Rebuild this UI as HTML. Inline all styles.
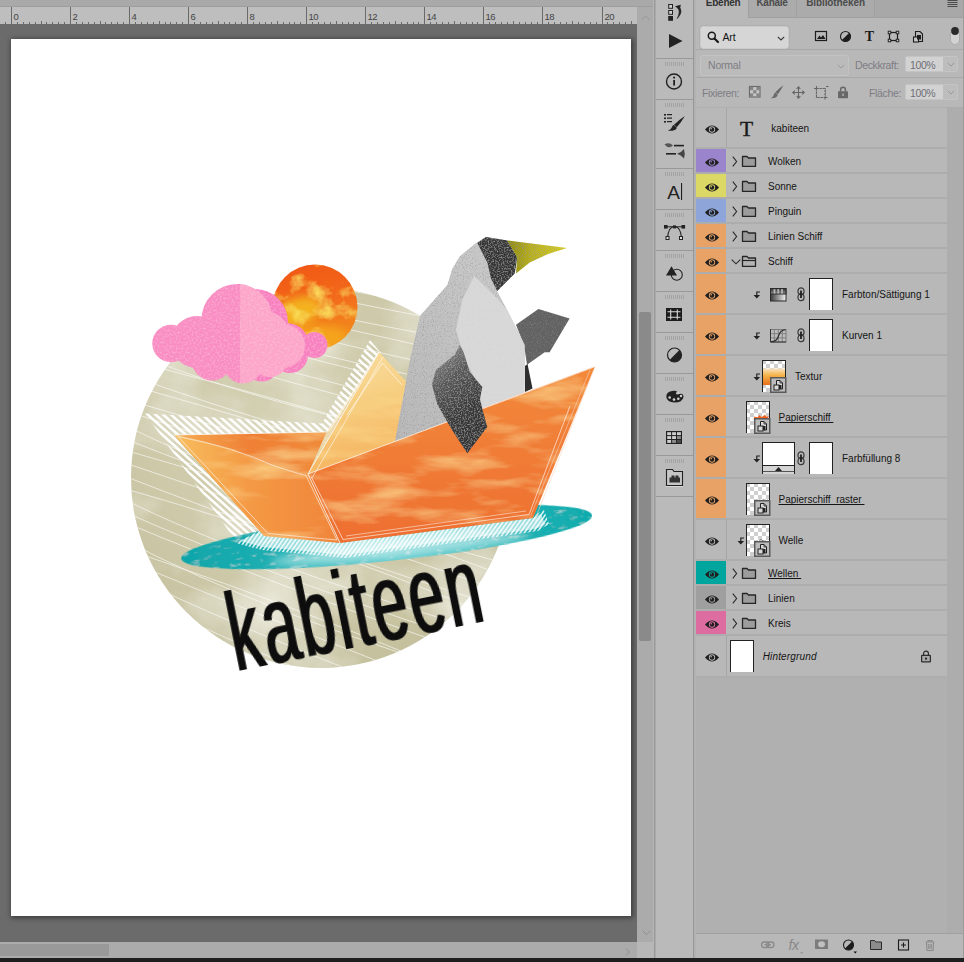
<!DOCTYPE html>
<html lang="de">
<head>
<meta charset="utf-8">
<title>kabiteen – Ebenen</title>
<style>
*{box-sizing:border-box;margin:0;padding:0}
html,body{width:964px;height:962px;overflow:hidden;background:#1e1e1e}
body{position:relative;font-family:"Liberation Sans",sans-serif;font-size:10.5px;color:#1a1a1a}
.abs,.abs>*{position:absolute}
svg{display:block;overflow:visible}
#topstrip{left:0;top:0;width:654px;height:7px;background:#a9a9a9;border-bottom:1px solid #9e9e9e}
#ruler{left:0;top:7px;width:637px;height:17px;background:#bebebe;overflow:hidden}
#ruler span{top:4px;font-size:9.5px;color:#454545;letter-spacing:-.6px}
#ruler i{width:1px;background:#6a6a6a;bottom:0}
#canvas{left:0;top:24px;width:637px;height:918px;background:#6b6b6b;overflow:hidden}
#page{left:11px;top:15px;width:620px;height:877px;background:#fff;box-shadow:1px 1px 5px 1px rgba(0,0,0,.45)}
#vscroll{left:637px;top:7px;width:16px;height:935px;background:#ababab}
#vthumb{left:2px;top:305px;width:12px;height:329px;background:#8a8a8a;border-radius:2px}
#hscroll{left:0;top:942px;width:637px;height:16px;background:#ababab}
#hthumb{left:0;top:2px;width:109px;height:12px;background:#999}
#corner{left:637px;top:942px;width:16px;height:16px;background:#b7b7b7}
#gap1{left:653px;top:0;width:3px;height:958px;background:#b6b6b6;border-right:1px solid #aaa;box-shadow:inset -1px 0 0 #999}
#tools{left:656px;top:0;width:37px;height:958px;background:#bababa}
#gap2{left:693px;top:0;width:3px;height:958px;background:#b2b2b2;border-left:1px solid #979797}
.tsep{left:0;width:37px;height:1px;background:#999}
.grip{left:9px;width:20px;height:4px;background:repeating-linear-gradient(90deg,#a3a3a3 0,#a3a3a3 1px,transparent 1px,transparent 2px)}
#panel{left:696px;top:0;width:268px;height:958px;background:#b8b8b8;overflow:hidden}
.tab{top:0;height:17px;font-size:10px;font-weight:bold;color:#4c4c4c;line-height:8px;white-space:nowrap;letter-spacing:-.25px}
.row{left:0;width:251px;background:#b8b8b8}
.th>*{position:absolute}
.sw{left:0;top:0;width:29.5px;bottom:0}
.nm{white-space:nowrap;font-size:10px;letter-spacing:0;color:#151515;line-height:12px}
.th{background:#fff;border:1px solid #222}
</style>
</head>
<body>
<div id="topstrip" class="abs"></div>
<div id="ruler" class="abs"><i style="left:5.0px;height:2px"></i><i style="left:11.0px;height:17px"></i><span style="left:13.5px">0</span><i style="left:17.0px;height:2px"></i><i style="left:23.0px;height:2px"></i><i style="left:29.0px;height:2px"></i><i style="left:35.0px;height:2px"></i><i style="left:41.0px;height:3px"></i><i style="left:46.0px;height:2px"></i><i style="left:52.0px;height:2px"></i><i style="left:58.0px;height:2px"></i><i style="left:64.0px;height:2px"></i><i style="left:70.0px;height:17px"></i><span style="left:72.5px">2</span><i style="left:76.0px;height:2px"></i><i style="left:82.0px;height:2px"></i><i style="left:88.0px;height:2px"></i><i style="left:94.0px;height:2px"></i><i style="left:100.0px;height:3px"></i><i style="left:105.0px;height:2px"></i><i style="left:111.0px;height:2px"></i><i style="left:117.0px;height:2px"></i><i style="left:123.0px;height:2px"></i><i style="left:129.0px;height:17px"></i><span style="left:131.5px">4</span><i style="left:135.0px;height:2px"></i><i style="left:141.0px;height:2px"></i><i style="left:147.0px;height:2px"></i><i style="left:153.0px;height:2px"></i><i style="left:159.0px;height:3px"></i><i style="left:165.0px;height:2px"></i><i style="left:170.0px;height:2px"></i><i style="left:176.0px;height:2px"></i><i style="left:182.0px;height:2px"></i><i style="left:188.0px;height:17px"></i><span style="left:190.5px">6</span><i style="left:194.0px;height:2px"></i><i style="left:200.0px;height:2px"></i><i style="left:206.0px;height:2px"></i><i style="left:212.0px;height:2px"></i><i style="left:218.0px;height:3px"></i><i style="left:224.0px;height:2px"></i><i style="left:229.0px;height:2px"></i><i style="left:235.0px;height:2px"></i><i style="left:241.0px;height:2px"></i><i style="left:247.0px;height:17px"></i><span style="left:249.5px">8</span><i style="left:253.0px;height:2px"></i><i style="left:259.0px;height:2px"></i><i style="left:265.0px;height:2px"></i><i style="left:271.0px;height:2px"></i><i style="left:277.0px;height:3px"></i><i style="left:283.0px;height:2px"></i><i style="left:289.0px;height:2px"></i><i style="left:294.0px;height:2px"></i><i style="left:300.0px;height:2px"></i><i style="left:306.0px;height:17px"></i><span style="left:308.5px">10</span><i style="left:312.0px;height:2px"></i><i style="left:318.0px;height:2px"></i><i style="left:324.0px;height:2px"></i><i style="left:330.0px;height:2px"></i><i style="left:336.0px;height:3px"></i><i style="left:342.0px;height:2px"></i><i style="left:348.0px;height:2px"></i><i style="left:353.0px;height:2px"></i><i style="left:359.0px;height:2px"></i><i style="left:365.0px;height:17px"></i><span style="left:367.5px">12</span><i style="left:371.0px;height:2px"></i><i style="left:377.0px;height:2px"></i><i style="left:383.0px;height:2px"></i><i style="left:389.0px;height:2px"></i><i style="left:395.0px;height:3px"></i><i style="left:401.0px;height:2px"></i><i style="left:407.0px;height:2px"></i><i style="left:413.0px;height:2px"></i><i style="left:418.0px;height:2px"></i><i style="left:424.0px;height:17px"></i><span style="left:426.5px">14</span><i style="left:430.0px;height:2px"></i><i style="left:436.0px;height:2px"></i><i style="left:442.0px;height:2px"></i><i style="left:448.0px;height:2px"></i><i style="left:454.0px;height:3px"></i><i style="left:460.0px;height:2px"></i><i style="left:466.0px;height:2px"></i><i style="left:472.0px;height:2px"></i><i style="left:477.0px;height:2px"></i><i style="left:483.0px;height:17px"></i><span style="left:485.5px">16</span><i style="left:489.0px;height:2px"></i><i style="left:495.0px;height:2px"></i><i style="left:501.0px;height:2px"></i><i style="left:507.0px;height:2px"></i><i style="left:513.0px;height:3px"></i><i style="left:519.0px;height:2px"></i><i style="left:525.0px;height:2px"></i><i style="left:531.0px;height:2px"></i><i style="left:537.0px;height:2px"></i><i style="left:542.0px;height:17px"></i><span style="left:544.5px">18</span><i style="left:548.0px;height:2px"></i><i style="left:554.0px;height:2px"></i><i style="left:560.0px;height:2px"></i><i style="left:566.0px;height:2px"></i><i style="left:572.0px;height:3px"></i><i style="left:578.0px;height:2px"></i><i style="left:584.0px;height:2px"></i><i style="left:590.0px;height:2px"></i><i style="left:596.0px;height:2px"></i><i style="left:602.0px;height:17px"></i><span style="left:604.5px">20</span><i style="left:607.0px;height:2px"></i><i style="left:613.0px;height:2px"></i><i style="left:619.0px;height:2px"></i><i style="left:625.0px;height:2px"></i><i style="left:631.0px;height:3px"></i></div>
<div id="canvas" class="abs"><div id="page" class="abs"></div>
<svg class="art" width="637" height="918" viewBox="0 24 637 918" style="position:absolute;left:0;top:0"><defs>
<clipPath id="cpCircle"><circle cx="321" cy="478" r="190"/></clipPath>
<clipPath id="cpPage"><rect x="11" y="39" width="620" height="877"/></clipPath>
<filter id="fPaper" x="0" y="0" width="100%" height="100%"><feTurbulence type="fractalNoise" baseFrequency="0.009 0.011" numOctaves="5" seed="3" result="n"/><feColorMatrix in="n" type="matrix" values="0 0 0 0 .93  0 0 0 0 .92  0 0 0 0 .84  1.5 0 0 0 -.62" result="l"/><feComposite in="l" in2="SourceGraphic" operator="in" result="lc"/><feMerge><feMergeNode in="SourceGraphic"/><feMergeNode in="lc"/></feMerge></filter>
<filter id="fGrain" x="0" y="0" width="100%" height="100%"><feTurbulence type="fractalNoise" baseFrequency="0.9" numOctaves="2" seed="5" result="n"/><feColorMatrix in="n" type="matrix" values="0 0 0 0 .25  0 0 0 0 .25  0 0 0 0 .25  0 1.6 0 0 -.78" result="d"/><feComposite in="d" in2="SourceGraphic" operator="in" result="dc"/><feMerge><feMergeNode in="SourceGraphic"/><feMergeNode in="dc"/></feMerge></filter>
<filter id="fGrainL" x="0" y="0" width="100%" height="100%"><feTurbulence type="fractalNoise" baseFrequency="0.8" numOctaves="2" seed="11" result="n"/><feColorMatrix in="n" type="matrix" values="0 0 0 0 .8  0 0 0 0 .8  0 0 0 0 .8  0 1.3 0 0 -.68" result="d"/><feComposite in="d" in2="SourceGraphic" operator="in" result="dc"/><feMerge><feMergeNode in="SourceGraphic"/><feMergeNode in="dc"/></feMerge></filter>
<filter id="fSun" x="0" y="0" width="100%" height="100%"><feTurbulence type="fractalNoise" baseFrequency="0.045 0.05" numOctaves="4" seed="8" result="n"/><feColorMatrix in="n" type="matrix" values="0 0 0 0 .97  0 0 0 0 .8  0 0 0 0 .12  2.6 0 0 0 -1.35" result="y"/><feComposite in="y" in2="SourceGraphic" operator="in" result="yc"/><feMerge><feMergeNode in="SourceGraphic"/><feMergeNode in="yc"/></feMerge></filter>
<filter id="fStreak" x="0" y="0" width="100%" height="100%"><feTurbulence type="fractalNoise" baseFrequency="0.012 0.05" numOctaves="4" seed="21" result="n"/><feColorMatrix in="n" type="matrix" values="0 0 0 0 .98  0 0 0 0 .72  0 0 0 0 .28  1.7 0 0 0 -.8" result="y"/><feComposite in="y" in2="SourceGraphic" operator="in" result="yc"/><feMerge><feMergeNode in="SourceGraphic"/><feMergeNode in="yc"/></feMerge></filter>
<filter id="fFoam" x="0" y="0" width="100%" height="100%"><feTurbulence type="fractalNoise" baseFrequency="0.09 0.25" numOctaves="3" seed="4" result="n"/><feColorMatrix in="n" type="matrix" values="0 0 0 0 .85  0 0 0 0 1  0 0 0 0 1  1.3 0 0 0 -.78" result="y"/><feComposite in="y" in2="SourceGraphic" operator="in" result="yc"/><feMerge><feMergeNode in="SourceGraphic"/><feMergeNode in="yc"/></feMerge></filter>
<filter id="fPink" x="0" y="0" width="100%" height="100%"><feTurbulence type="fractalNoise" baseFrequency="0.5" numOctaves="2" seed="2" result="n"/><feColorMatrix in="n" type="matrix" values="0 0 0 0 1  0 0 0 0 .72  0 0 0 0 .84  0 .8 0 0 -.34" result="y"/><feComposite in="y" in2="SourceGraphic" operator="in" result="yc"/><feMerge><feMergeNode in="SourceGraphic"/><feMergeNode in="yc"/></feMerge></filter>
<filter id="fGrainD" x="0" y="0" width="100%" height="100%"><feTurbulence type="fractalNoise" baseFrequency="0.7" numOctaves="2" seed="9" result="n"/><feColorMatrix in="n" type="matrix" values="0 0 0 0 .62  0 0 0 0 .62  0 0 0 0 .62  0 1.1 0 0 -.5" result="d"/><feComposite in="d" in2="SourceGraphic" operator="in" result="dc"/><feMerge><feMergeNode in="SourceGraphic"/><feMergeNode in="dc"/></feMerge></filter><filter id="fBlur" x="-30%" y="-30%" width="160%" height="160%"><feGaussianBlur stdDeviation="5"/></filter><filter id="fFat" x="-5%" y="-20%" width="110%" height="140%"><feMorphology operator="dilate" radius="2.1 0"/></filter><pattern id="hatch" width="5.2" height="5.2" patternUnits="userSpaceOnUse" patternTransform="rotate(42)"><rect x="0" y="0" width="5.2" height="2.5" fill="#fff"/></pattern>
<pattern id="hatchT" width="3.4" height="3.4" patternUnits="userSpaceOnUse" patternTransform="rotate(-55)"><rect x="0" y="0" width="3.4" height="1.5" fill="#fff"/></pattern>
<linearGradient id="gHullL" x1="0" y1="0" x2="1" y2="0"><stop offset="0" stop-color="#f8bd5e"/><stop offset=".45" stop-color="#f49a45"/><stop offset="1" stop-color="#f0843a"/></linearGradient>
<linearGradient id="gHullR" x1="0" y1="0" x2="0" y2="1"><stop offset="0" stop-color="#f28a3a"/><stop offset=".5" stop-color="#f07c36"/><stop offset="1" stop-color="#ee6f30"/></linearGradient>
<linearGradient id="gInner" x1="0" y1="0" x2="1" y2="0"><stop offset="0" stop-color="#f6ad55"/><stop offset=".5" stop-color="#ef8035"/><stop offset="1" stop-color="#f08a3a"/></linearGradient>
<linearGradient id="gSail" x1="0" y1="0" x2=".3" y2="1"><stop offset="0" stop-color="#f9dfa6"/><stop offset=".45" stop-color="#f7cf82"/><stop offset="1" stop-color="#f5b25c"/></linearGradient>
<linearGradient id="gWave" x1="0" y1="0" x2="1" y2="0"><stop offset="0" stop-color="#0fa5a9"/><stop offset=".25" stop-color="#1fb0b3"/><stop offset=".5" stop-color="#45c2c5"/><stop offset=".8" stop-color="#20b2b4"/><stop offset="1" stop-color="#0fabad"/></linearGradient>
<linearGradient id="gFlip" x1=".2" y1="0" x2=".6" y2="1"><stop offset="0" stop-color="#8a8a8a"/><stop offset=".3" stop-color="#5a5a5a"/><stop offset=".65" stop-color="#3a3a3a"/><stop offset="1" stop-color="#333"/></linearGradient><linearGradient id="gBeak" x1="0" y1="0" x2="1" y2="0"><stop offset="0" stop-color="#8e8a12"/><stop offset=".4" stop-color="#b9b11a"/><stop offset="1" stop-color="#d8d020"/></linearGradient><linearGradient id="gBody" x1="1" y1="0" x2="0" y2="1"><stop offset="0" stop-color="#cdcdcd"/><stop offset="1" stop-color="#b9b9b9"/></linearGradient><radialGradient id="gCirc" cx=".45" cy=".4" r=".65"><stop offset="0" stop-color="#d6d3b7"/><stop offset=".7" stop-color="#cbc7a6"/><stop offset="1" stop-color="#c3bf9c"/></radialGradient>
<linearGradient id="gSun" x1=".3" y1="0" x2=".6" y2="1"><stop offset="0" stop-color="#f15818"/><stop offset=".45" stop-color="#f2681a"/><stop offset="1" stop-color="#f2921e"/></linearGradient>
<clipPath id="cpBodyHide"><path d="M380 200 H620 V357 L595 366.500 L308 474 L308 200Z"/></clipPath>
</defs><g clip-path="url(#cpPage)"><circle cx="321" cy="478" r="190" fill="url(#gCirc)" filter="url(#fPaper)"/><g clip-path="url(#cpCircle)" stroke="#fff" stroke-width=".8" fill="none" opacity=".75"><path d="M120 108.9 Q323 144.1 520 188.9"/><path d="M120 119.8 Q252 164.3 520 199.8"/><path d="M120 134.2 Q304 168.0 520 214.2"/><path d="M120 145.8 Q293 180.0 520 225.8"/><path d="M120 157.4 Q294 191.7 520 237.4"/><path d="M120 169.9 Q268 210.8 520 249.9"/><path d="M120 185.8 Q247 226.9 520 265.8"/><path d="M120 198.0 Q268 236.5 520 278.0"/><path d="M120 207.3 Q277 252.3 520 287.3"/><path d="M120 222.0 Q313 264.0 520 304.8"/><path d="M120 233.9 Q263 281.1 520 319.5"/><path d="M120 245.1 Q264 290.3 520 333.5"/><path d="M120 259.2 Q248 305.5 520 350.4"/><path d="M120 272.9 Q303 321.6 520 366.9"/><path d="M120 286.1 Q280 333.5 520 382.9"/><path d="M120 297.3 Q286 353.0 520 396.9"/><path d="M120 308.8 Q329 364.1 520 411.2"/><path d="M120 324.2 Q278 370.9 520 429.4"/><path d="M120 335.2 Q333 394.4 520 443.2"/><path d="M120 347.2 Q249 404.1 520 458.0"/><path d="M120 357.7 Q336 413.4 520 471.3"/><path d="M120 371.6 Q293 435.8 520 488.0"/><path d="M120 382.2 Q337 444.2 520 501.4"/><path d="M120 397.8 Q344 462.9 520 519.8"/><path d="M120 408.9 Q316 474.0 520 533.7"/><path d="M120 422.5 Q248 490.4 520 550.1"/><path d="M120 437.0 Q300 508.5 520 567.4"/><path d="M120 448.7 Q333 509.2 520 581.9"/><path d="M120 461.2 Q327 531.3 520 597.2"/><path d="M120 474.4 Q289 540.8 520 613.2"/><path d="M120 487.3 Q360 556.0 520 628.9"/><path d="M120 497.3 Q254 564.8 520 641.7"/><path d="M120 510.0 Q276 579.6 520 657.2"/><path d="M120 520.3 Q290 591.7 520 670.3"/><path d="M120 537.5 Q261 613.9 520 690.3"/><path d="M120 547.2 Q353 625.7 520 702.8"/><path d="M120 557.8 Q310 636.0 520 716.2"/><path d="M120 571.2 Q285 650.6 520 732.4"/><path d="M120 586.1 Q269 666.4 520 750.1"/><path d="M120 595.4 Q269 674.3 520 762.2"/><path d="M120 611.0 Q346 688.9 520 780.6"/><path d="M120 623.0 Q240 705.9 520 795.4"/></g><g clip-path="url(#cpCircle)"><path d="M145 413.500 L322 423.500 L370 340 L381 353 L328 433 L174 436 L265 537 L236 541Z" fill="url(#hatch)"/></g><g transform="rotate(-6 386.600 537)"><ellipse cx="386.600" cy="537" rx="206.500" ry="24" fill="url(#gWave)" filter="url(#fFoam)"/></g><clipPath id="cpWave"><ellipse cx="386.600" cy="537" rx="206.500" ry="24" transform="rotate(-6 386.600 537)"/></clipPath><g clip-path="url(#cpWave)"><ellipse cx="400" cy="549" rx="130" ry="9" fill="#fff" opacity=".55" filter="url(#fBlur)" transform="rotate(-6 400 549)"/><path d="M240 541 L262 531 L340 543 L533 518 L541 514 L545 524 L535 529 L345 555 L262 547Z" fill="#f2fbfb" opacity=".6"/><path d="M236 543 L262 529 L340 541 L533 516 L544 510 L549 524 L538 531 L345 558 L262 550Z" fill="url(#hatchT)" opacity=".9"/></g><path d="M379 352 L308 474 L360 455.700 L450 422 L404.600 380Z" fill="url(#gSail)" filter="url(#fStreak)"/><path d="M379 352 L326.500 432 L308 474Z" fill="#f9d99a" opacity=".55"/><path d="M174 435 L326.500 432 L308 474 Q270 467 234.600 449.700 Q200 440 174 435Z" fill="url(#gInner)" filter="url(#fStreak)"/><g clip-path="url(#cpBodyHide)"><path d="M486 237 L476 243 L459.800 256.200 L452.300 268.700 L447.300 284.900 L419.900 316 L410 359.700 L393 452 L524 398 L524.700 344.700 L507 309.800 L497 291 L514.700 273.600 L517.200 257.400 L507.200 240.500Z" fill="url(#gBody)" filter="url(#fGrain)"/><path d="M516 324.800 L538.400 309 L569.600 318.500 L549.600 352.200 L544.600 352.200 L527 364.700 L524 345Z" fill="#626262" filter="url(#fGrain)"/><path d="M525 366 L527.500 364 L532.500 388.400 L525 392Z" fill="#2e2e2e"/><path d="M474.300 276 L496 297.300 L507 309.800 L524.700 344.700 L524.700 392 L482.300 409.600 L478.500 384.600 L464.800 359.700 L456 329.800 L462.300 299.800Z" fill="#d7d7d7" filter="url(#fGrainL)"/><path d="M477.300 243 L486 237 L507.200 240.500 L517.200 257.400 L514.700 273.600 L497.200 291 L491 278.600 L487.300 262.400Z" fill="#363636" filter="url(#fGrainD)"/><path d="M507.200 240.500 L567 248 L548 254 L529.700 262.400 L516 273.600 L517.200 257.400Z" fill="url(#gBeak)" filter="url(#fGrain)"/></g><path d="M174 435 Q200 440 234.600 449.700 Q270 467 308 474 L340 543 L264 536Z" fill="url(#gHullL)" filter="url(#fStreak)"/><path d="M308 474 L595 366.500 L533 518 L340 543Z" fill="url(#gHullR)" filter="url(#fStreak)"/><g fill="none" stroke="#fff" stroke-width=".8" opacity=".9"><path d="M174 435 L326.500 432 M379 352 L308 474 L340 543 M308 474 L595 366.500 M379 352 L326.500 432"/><path d="M178 436.500 Q236 448 272 465 Q292 472 306 475.500 L337 540 L268 533.500Z" opacity=".8"/><path d="M311 476.500 L343 539.500 L529 514.500 L570 406" opacity=".85"/><path d="M346 536 L526 511" opacity=".7"/><path d="M383 357 L312 478 M376 356 L330 430 M382.500 363 L347 415 M382.500 363 L402 385" opacity=".8"/><path d="M590 370 L531 515 M594 369 L536 517" stroke="#fbd0b8" opacity=".8"/><path d="M471 413 L593 367.500" stroke="#fbd0b8" stroke-width="1.200" stroke-dasharray="1 1"/></g><path d="M459.800 344.700 L454.800 354.700 L436 369.700 L431.900 384.600 L437.400 404.600 L452 430 L467.300 453.200 L487.300 427 L479.800 399.600 L482.300 387 L469.800 372 L463.600 352.200Z" fill="url(#gFlip)" filter="url(#fGrainD)"/><g filter="url(#fSun)"><circle cx="315" cy="307" r="42.500" fill="url(#gSun)"/><clipPath id="cpSun"><circle cx="315" cy="307" r="42.500"/></clipPath><g clip-path="url(#cpSun)"><ellipse cx="297" cy="312" rx="26" ry="14" fill="#f4c522" opacity=".8" transform="rotate(-20 297 312)" filter="url(#fBlur)"/><ellipse cx="318" cy="337" rx="30" ry="12" fill="#f6b01f" opacity=".7" filter="url(#fBlur)"/></g></g><g fill="#f87fc0" filter="url(#fPink)"><circle cx="314.500" cy="345" r="13"/><circle cx="287" cy="345" r="22"/><circle cx="255" cy="322" r="33"/><circle cx="290" cy="355" r="18"/><circle cx="262" cy="364" r="17.500"/></g><g filter="url(#fPink)"><clipPath id="cpL"><rect x="140" y="270" width="100" height="130"/></clipPath><clipPath id="cpR"><rect x="240" y="270" width="100" height="130"/></clipPath><g fill="#f98cc2" clip-path="url(#cpL)"><circle cx="237" cy="319.5" r="35.5"/><circle cx="171" cy="343.5" r="18.7"/><circle cx="197" cy="342" r="26"/><circle cx="212" cy="360" r="20.5"/><circle cx="243" cy="364" r="19.5"/><circle cx="270" cy="359" r="18"/><circle cx="283" cy="346" r="22"/><circle cx="262" cy="338" r="28"/><rect x="185" y="338" width="90" height="24"/></g><g fill="#fca5c9" clip-path="url(#cpR)"><circle cx="237" cy="319.5" r="35.5"/><circle cx="171" cy="343.5" r="18.7"/><circle cx="197" cy="342" r="26"/><circle cx="212" cy="360" r="20.5"/><circle cx="243" cy="364" r="19.5"/><circle cx="270" cy="359" r="18"/><circle cx="283" cy="346" r="22"/><circle cx="262" cy="338" r="28"/><rect x="185" y="338" width="90" height="24"/></g></g><g transform="translate(236.500 671.300) rotate(-11.400) scale(.561 1)"><text x="0" y="0" letter-spacing="5" font-family="Liberation Sans, sans-serif" font-size="111" fill="#0a0a0a" filter="url(#fFat)">kabiteen</text></g></g></svg>
</div>
<div id="vscroll" class="abs"><div id="vthumb"></div>
<svg width="10" height="6" style="left:4px;top:7.500px"><path d="M.700 4.500 L4.500 .900 L8.300 4.500" fill="none" stroke="#989898" stroke-width="1"/></svg>
<svg width="10" height="6" style="left:4.500px;top:922.500px"><path d="M.700 .900 L4.500 4.500 L8.300 .900" fill="none" stroke="#8e8e8e" stroke-width="1"/></svg>
</div>
<div id="hscroll" class="abs"><div id="hthumb"></div>
<svg width="6" height="10" style="left:624.500px;top:5.500px"><path d="M.900 .700 L4.500 4 L.900 7.300" fill="none" stroke="#8e8e8e" stroke-width="1"/></svg>
</div>
<div id="corner" class="abs"></div>
<div id="gap1" class="abs"></div>
<div id="tools" class="abs"><div class="tsep" style="top:58px"></div><div class="grip" style="top:62px"></div><div class="tsep" style="top:99px"></div><div class="grip" style="top:103px"></div><div class="tsep" style="top:168px"></div><div class="grip" style="top:172px"></div><div class="tsep" style="top:209px"></div><div class="grip" style="top:213px"></div><div class="tsep" style="top:250px"></div><div class="grip" style="top:254px"></div><div class="tsep" style="top:291px"></div><div class="grip" style="top:295px"></div><div class="tsep" style="top:332px"></div><div class="grip" style="top:336px"></div><div class="tsep" style="top:373px"></div><div class="grip" style="top:377px"></div><div class="tsep" style="top:414px"></div><div class="grip" style="top:418px"></div><div class="tsep" style="top:455px"></div><div class="grip" style="top:459px"></div><div class="tsep" style="top:496px"></div><svg width="37" height="520" viewBox="656 0 37 520" style="left:0;top:0">
<g fill="none" stroke="#222" stroke-width="1">
<rect x="668.700" y="4.500" width="3.800" height="3.800" fill="#d0d0d0"/><rect x="668.700" y="10.500" width="3.800" height="3.800" fill="#d0d0d0"/>
</g>
<rect x="668.200" y="16" width="4.800" height="4.800" fill="#222"/>
<path d="M678 6 Q684.500 11 677.200 18.600 Q681 11.500 677.500 7.500Z" fill="#222" stroke="#222" stroke-width=".6"/>
<path d="M675 6.300 L680.800 4.800 L679.800 10 Z" fill="#222"/>
<path d="M669 34 L682.5 41 L669 48 Z" fill="#222"/>
<circle cx="674" cy="81.5" r="7.5" fill="none" stroke="#222" stroke-width="1.4"/>
<rect x="673.2" y="80" width="1.8" height="5.5" fill="#222"/><circle cx="674.1" cy="77.6" r="1.1" fill="#222"/>
<g fill="#222">
<rect x="664" y="114" width="2" height="1.6"/><rect x="667" y="114" width="5" height="1.2"/>
<rect x="664" y="117.5" width="2" height="1.6"/><rect x="667" y="117.5" width="5" height="1.2"/>
<rect x="664" y="121" width="2" height="1.6"/><rect x="667" y="121" width="5" height="1.2"/>
<path d="M684.800 116 Q681.500 122 676.800 127.300 L674 124.800 Q679.500 119.500 684.800 116Z"/>
<path d="M674 125 L676.800 127.700 Q676 131.300 667.800 130.800 Q671.300 129.500 672 127 Q672.500 125 674 125Z"/>
<rect x="674" y="144.8" width="10" height="1.6"/><rect x="666" y="153" width="10" height="1.6"/>
</g>
<path d="M664.5 144.5 Q669 141.5 673 145.5 Q669 149.500 664.500 144.500Z" fill="#555"/>
<path d="M684 149 Q681 153 677 153.800 Q681 155 684 158.5 Q685.500 154 684 149Z" fill="#444"/>
<text x="667.300" y="198.800" font-size="19" fill="#222" font-family="Liberation Sans, sans-serif">A</text>
<rect x="681" y="183" width="1.100" height="17" fill="#222"/>
<path d="M667.500 238 Q668.500 226.500 674.500 226.500 Q680.500 226.500 681.500 238" fill="none" stroke="#222" stroke-width="1.1"/>
<path d="M665 226.800 H684" stroke="#222" stroke-width="1"/>
<rect x="664" y="225" width="3.6" height="3.600" fill="#222"/><rect x="673" y="225.400" width="3" height="3" fill="#222"/><rect x="681.500" y="225" width="3.600" height="3.600" fill="#222"/>
<rect x="666" y="236.500" width="3" height="3" fill="#ddd" stroke="#222" stroke-width="1"/><rect x="679.500" y="236.500" width="3" height="3" fill="#ddd" stroke="#222" stroke-width="1"/>
<circle cx="676.800" cy="274.700" r="5.500" fill="none" stroke="#222" stroke-width="1.100"/>
<path d="M666 275.500 L671.500 266.300 L677 275.500 Z" fill="#222"/>
<rect x="666" y="308" width="16" height="13" fill="#1c1c1c"/>
<g stroke="#d8d8d8" stroke-width="1.100" fill="none"><path d="M667.500 311.800 H680.500 M667.500 317.200 H680.500 M670.700 309.500 V319.500 M677.300 309.500 V319.500"/></g>
<rect x="672" y="313.300" width="4" height="2.400" fill="#1c1c1c"/>
<circle cx="674.500" cy="355" r="7" fill="none" stroke="#222" stroke-width="1.200"/>
<path d="M679.450 350.050 A7 7 0 0 1 669.550 359.950 Z" fill="#222"/>
<path d="M666.300 397 Q666 392 672 391 Q676 390.500 677 391.500 Q674.500 394 677.500 394.500 Q683.500 392 683.500 397 Q682.500 402.500 674.500 402.500 Q667 402 666.300 397Z" fill="#222"/>
<g fill="#d0d0d0"><circle cx="669.700" cy="397.500" r="1.300"/><circle cx="674" cy="399.600" r="1.300"/><circle cx="678.300" cy="398.800" r="1.300"/><circle cx="681" cy="396" r="1.200"/><circle cx="678.300" cy="393" r="1"/></g>
<rect x="666" y="431" width="16" height="13" fill="#222"/>
<g fill="#cfcfcf"><rect x="667.200" y="432.200" width="3.900" height="2.900"/><rect x="672.100" y="432.200" width="3.900" height="2.900"/><rect x="677" y="432.200" width="3.900" height="2.900"/>
<rect x="667.200" y="436.100" width="3.900" height="2.900"/><rect x="672.100" y="436.100" width="3.900" height="2.900"/><rect x="667.200" y="440" width="3.900" height="2.900"/></g>
<g fill="#8c8c8c"><rect x="677" y="436.100" width="3.900" height="2.900"/><rect x="672.100" y="440" width="3.900" height="2.900"/></g>
<rect x="677" y="440" width="3.900" height="2.900" fill="#4a4a4a"/>
<path d="M666.500 485.500 V469.500 H672.500 L674 471.500 H682.500 V485.500 Z" fill="#c6c6c6" stroke="#222" stroke-width="1.100"/>
<path d="M669.500 482.500 V477.500 H671.500 V475.500 H674.500 V477.500 H675.500 V475.500 H678.500 V477.500 H680 V482.500 Z" fill="#333"/>
<path d="M666 486.500 H683" stroke="#d8d8d8" stroke-width="1"/>
</svg></div>
<div id="gap2" class="abs"></div>
<div id="panel" class="abs"><div style="left:0;top:0;width:268px;height:17px;background:#b8b8b8"></div><div style="left:52px;top:0;width:127px;height:18px;background:#ababab;border-bottom:1px solid #a0a0a0"></div><div style="left:100px;top:0;width:1px;height:17px;background:#a0a0a0"></div><div style="left:52px;top:0;width:1px;height:17px;background:#a0a0a0"></div><div style="left:178px;top:0;width:1px;height:17px;background:#a0a0a0"></div><div style="left:179px;top:0;width:89px;height:18px;background:#a8a8a8;border-bottom:1px solid #a0a0a0"></div><div class="tab" style="left:9.800px;top:-.700px;color:#333">Ebenen</div><div class="tab" style="left:60.400px;top:-.700px">Kanäle</div><div class="tab" style="left:110.200px;top:-.700px;letter-spacing:-.1px">Bibliotheken</div><svg width="12" height="8" style="left:251px;top:0"><path d="M0.5 0.500 H10.500 M0.500 2.500 H10.500 M0.500 4.500 H10.500 M0.500 6.500 H10.500" stroke="#4a4a4a" stroke-width="1"/></svg><div style="left:3.5px;top:26px;width:89px;height:22.500px;background:#d6d6d6;border:1px solid #cacaca;border-radius:3px;box-shadow:0 0 0 .5px #a8a8a8"></div><svg width="13" height="13" style="left:11px;top:30.500px"><circle cx="4.800" cy="4.800" r="3.500" fill="none" stroke="#1a1a1a" stroke-width="1.500"/><path d="M7.500 7.500 L11 11" stroke="#1a1a1a" stroke-width="2.200" stroke-linecap="round"/></svg><div class="nm" style="left:26.400px;top:31px;font-size:10.500px;letter-spacing:-.1px">Art</div><svg width="8" height="6" style="left:81px;top:36px"><path d="M.8 .8 L4 4 L7.200 .8" fill="none" stroke="#333" stroke-width="1.100"/></svg><svg width="160" height="24" viewBox="810 24 160 24" style="left:114px;top:24px">
<rect x="815.500" y="31.500" width="11" height="9" fill="none" stroke="#1c1c1c" stroke-width="1.200"/><path d="M817 39 L819.500 35.500 L821 37.500 L823 35 L825.500 39Z" fill="#1c1c1c"/>
<circle cx="845.500" cy="36.500" r="5" fill="none" stroke="#1c1c1c" stroke-width="1.100"/><path d="M849.040 32.960 A5 5 0 0 1 841.960 40.040Z" fill="#1c1c1c"/>
<text x="864.800" y="41.300" font-family="Liberation Serif, serif" font-weight="bold" font-size="14" fill="#1c1c1c">T</text>
<rect x="889.500" y="32.500" width="8" height="8" fill="none" stroke="#1c1c1c" stroke-width="1.200"/>
<g fill="#c8c8c8" stroke="#1c1c1c" stroke-width=".9"><rect x="888.200" y="31.200" width="2.600" height="2.600"/><rect x="896.200" y="31.200" width="2.600" height="2.600"/><rect x="888.200" y="39.200" width="2.600" height="2.600"/><rect x="896.200" y="39.200" width="2.600" height="2.600"/></g>
<path d="M915.500 31.500 H920 L922.500 34 V41.500 H915.500Z" fill="none" stroke="#1c1c1c" stroke-width="1.100"/>
<rect x="913.500" y="37" width="5" height="5" fill="#c8c8c8" stroke="#1c1c1c" stroke-width="1.100"/><rect x="917" y="35" width="4" height="4.500" fill="#1c1c1c"/>
<rect x="950.500" y="27" width="9" height="17.500" rx="4.500" fill="#d2d2d2" stroke="#adadad" stroke-width="1"/><circle cx="955" cy="31" r="3.900" fill="#2a2a2a"/>
</svg><div style="left:0;top:49px;width:268px;height:1px;background:#a8a8a8"></div><div style="left:3.500px;top:54.500px;width:149px;height:21.500px;background:#bbb;border:1px solid #c3c3c3;border-radius:3px"></div><div class="nm" style="left:12px;top:59px;color:#7d7d84;font-size:10.500px;letter-spacing:-.2px">Normal</div><svg width="8" height="6" style="left:141px;top:64px"><path d="M.8 .8 L4 4 L7.200 .8" fill="none" stroke="#999" stroke-width="1"/></svg><div class="nm" style="left:159px;top:59px;color:#7d7d84;font-size:10.500px;letter-spacing:-.35px">Deckkraft:</div><div style="left:209px;top:56px;width:53px;height:15.500px;background:#bdbdbd;border:1px solid #c4c4c4;border-radius:2px"></div><div style="left:210px;top:57px;width:37px;height:13.500px;background:#d2d2d2"></div><div class="nm" style="left:214px;top:59px;color:#6f6f76;font-size:10.500px;letter-spacing:-.4px">100%</div><svg width="8" height="6" style="left:251px;top:62px"><path d="M.8 .8 L4 4 L7.200 .8" fill="none" stroke="#999" stroke-width="1"/></svg><div style="left:0;top:77px;width:268px;height:1px;background:#a8a8a8"></div><div class="nm" style="left:6px;top:87px;color:#7d7d84;font-size:10.500px;letter-spacing:-.35px">Fixieren:</div><svg width="110" height="20" viewBox="746 82 110 20" style="left:50px;top:82px">
<rect x="749.500" y="86.500" width="10.500" height="10.500" fill="#c6c6c6" stroke="#6e6e6e" stroke-width="1.200"/>
<g fill="#858585"><rect x="750" y="87" width="3.200" height="3.200"/><rect x="756.400" y="87" width="3.200" height="3.200"/><rect x="753.200" y="90.200" width="3.200" height="3.200"/><rect x="750" y="93.400" width="3.200" height="3.200"/><rect x="756.400" y="93.400" width="3.200" height="3.200"/></g>
<path d="M783.500 85.200 Q781 90 777.800 94.200 L775.300 92.200 Q779 88 783.500 85.200Z" fill="#6a6a6a"/><path d="M775.300 92.500 L777.800 94.700 Q777.300 98.300 770.800 98.300 Q773.300 97 773.700 95 Q774 93 775.300 92.500Z" fill="#6a6a6a"/>
<g stroke="#666" stroke-width="1.100" fill="none"><path d="M798.500 87 V98 M793 92.500 H804"/><path d="M796.700 88.800 L798.500 86.800 L800.300 88.800 M796.700 96.200 L798.500 98.200 L800.300 96.200 M794.800 90.700 L792.800 92.500 L794.800 94.300 M802.200 90.700 L804.200 92.500 L802.200 94.300"/></g>
<g stroke="#666" stroke-width="1.100" fill="none"><path d="M816.500 86 V97.500 H827.500" stroke-dasharray="none"/><path d="M814 88.500 H825 V99.500" /><path d="M826 86.500 L828.500 86.500" /></g>
<rect x="816.500" y="88.500" width="8.500" height="9" fill="#b8b8b8" stroke="#666" stroke-width="1.100" stroke-dasharray="2 1.300"/>
<rect x="838" y="91.300" width="10" height="7" rx=".8" fill="#686868"/><path d="M840.600 91.500 V89.600 Q840.600 87.200 843 87.200 Q845.400 87.200 845.400 89.600 V91.500" fill="none" stroke="#686868" stroke-width="1.500"/><rect x="842.400" y="93.500" width="1.300" height="2.500" fill="#bdbdbd"/>
</svg><div class="nm" style="left:173px;top:87px;color:#7d7d84;font-size:10.500px;letter-spacing:-.35px">Fläche:</div><div style="left:209px;top:84px;width:53px;height:15.500px;background:#bdbdbd;border:1px solid #c4c4c4;border-radius:2px"></div><div style="left:210px;top:85px;width:37px;height:13.500px;background:#d2d2d2"></div><div class="nm" style="left:214px;top:87px;color:#6f6f76;font-size:10.500px;letter-spacing:-.4px">100%</div><svg width="8" height="6" style="left:251px;top:90px"><path d="M.8 .8 L4 4 L7.200 .8" fill="none" stroke="#999" stroke-width="1"/></svg><div style="left:0;top:107px;width:268px;height:826px;background:#b0b0b0"></div><div style="left:251px;top:107px;width:17px;height:826px;background:#adadad"></div><div style="left:0;top:108px;width:251px;height:570px;background:#adadad"></div><div class="row abs" style="top:108px;height:39px"><div style="left:29.500px;top:0;width:1px;bottom:0;background:#a6a6a6"></div><svg width="14" height="9" viewBox="0 0 14 9" style="left:8.500px;top:17.1px"><path d="M0 4.500 Q7 -3.700 14 4.500 Q7 12.700 0 4.500Z" fill="#1f1f1f"/><circle cx="7" cy="4.500" r="3.150" fill="#b8b8b8"/><circle cx="7" cy="4.500" r="2.250" fill="#1f1f1f"/><circle cx="6.200" cy="3.700" r=".8" fill="#b8b8b8"/></svg><svg width="16" height="17" style="left:43.500px;top:13.2px"><text x="0" y="14.500" font-family="Liberation Serif, serif" font-size="21.500" fill="#1c1c1c" stroke="#1c1c1c" stroke-width=".45">T</text></svg><div class="nm" style="left:75.3px;top:14.5px">kabiteen</div></div><div class="row abs" style="top:149px;height:23px"><div class="sw" style="background:#9a84cb"></div><svg width="14" height="9" viewBox="0 0 14 9" style="left:8.500px;top:8.6px"><path d="M0 4.500 Q7 -3.700 14 4.500 Q7 12.700 0 4.500Z" fill="#1f1f1f"/><circle cx="7" cy="4.500" r="3.150" fill="#9a84cb"/><circle cx="7" cy="4.500" r="2.250" fill="#1f1f1f"/><circle cx="6.200" cy="3.700" r=".8" fill="#9a84cb"/></svg><svg width="6" height="11" style="left:36px;top:7.3px"><path d="M.800 .700 L4.600 5.500 L.800 10.300" fill="none" stroke="#2a2a2a" stroke-width="1.100"/></svg><svg width="16" height="13" style="left:44.5px;top:6.2px"><path d="M1.500 11.400 V1.500 H6 L7.500 3 H14.500 V11.400Z" fill="#9c9c9c" stroke="#262626" stroke-width="1.300" stroke-linejoin="round"/></svg><div class="nm" style="left:72px;top:7.0px">Wolken</div></div><div class="row abs" style="top:174px;height:23px"><div class="sw" style="background:#dcd866"></div><svg width="14" height="9" viewBox="0 0 14 9" style="left:8.500px;top:8.6px"><path d="M0 4.500 Q7 -3.700 14 4.500 Q7 12.700 0 4.500Z" fill="#1f1f1f"/><circle cx="7" cy="4.500" r="3.150" fill="#dcd866"/><circle cx="7" cy="4.500" r="2.250" fill="#1f1f1f"/><circle cx="6.200" cy="3.700" r=".8" fill="#dcd866"/></svg><svg width="6" height="11" style="left:36px;top:7.3px"><path d="M.800 .700 L4.600 5.500 L.800 10.300" fill="none" stroke="#2a2a2a" stroke-width="1.100"/></svg><svg width="16" height="13" style="left:44.5px;top:6.2px"><path d="M1.500 11.400 V1.500 H6 L7.500 3 H14.500 V11.400Z" fill="#9c9c9c" stroke="#262626" stroke-width="1.300" stroke-linejoin="round"/></svg><div class="nm" style="left:72px;top:7.0px">Sonne</div></div><div class="row abs" style="top:199px;height:23px"><div class="sw" style="background:#8da5d9"></div><svg width="14" height="9" viewBox="0 0 14 9" style="left:8.500px;top:8.6px"><path d="M0 4.500 Q7 -3.700 14 4.500 Q7 12.700 0 4.500Z" fill="#1f1f1f"/><circle cx="7" cy="4.500" r="3.150" fill="#8da5d9"/><circle cx="7" cy="4.500" r="2.250" fill="#1f1f1f"/><circle cx="6.200" cy="3.700" r=".8" fill="#8da5d9"/></svg><svg width="6" height="11" style="left:36px;top:7.3px"><path d="M.800 .700 L4.600 5.500 L.800 10.300" fill="none" stroke="#2a2a2a" stroke-width="1.100"/></svg><svg width="16" height="13" style="left:44.5px;top:6.2px"><path d="M1.500 11.400 V1.500 H6 L7.500 3 H14.500 V11.400Z" fill="#9c9c9c" stroke="#262626" stroke-width="1.300" stroke-linejoin="round"/></svg><div class="nm" style="left:72px;top:7.0px">Pinguin</div></div><div class="row abs" style="top:224px;height:23px"><div class="sw" style="background:#e9a265"></div><svg width="14" height="9" viewBox="0 0 14 9" style="left:8.500px;top:8.6px"><path d="M0 4.500 Q7 -3.700 14 4.500 Q7 12.700 0 4.500Z" fill="#1f1f1f"/><circle cx="7" cy="4.500" r="3.150" fill="#e9a265"/><circle cx="7" cy="4.500" r="2.250" fill="#1f1f1f"/><circle cx="6.200" cy="3.700" r=".8" fill="#e9a265"/></svg><svg width="6" height="11" style="left:36px;top:7.3px"><path d="M.800 .700 L4.600 5.500 L.800 10.300" fill="none" stroke="#2a2a2a" stroke-width="1.100"/></svg><svg width="16" height="13" style="left:44.5px;top:6.2px"><path d="M1.500 11.400 V1.500 H6 L7.500 3 H14.500 V11.400Z" fill="#9c9c9c" stroke="#262626" stroke-width="1.300" stroke-linejoin="round"/></svg><div class="nm" style="left:72px;top:7.0px">Linien Schiff</div></div><div class="row abs" style="top:249px;height:23px"><div class="sw" style="background:#e9a265"></div><svg width="14" height="9" viewBox="0 0 14 9" style="left:8.500px;top:8.6px"><path d="M0 4.500 Q7 -3.700 14 4.500 Q7 12.700 0 4.500Z" fill="#1f1f1f"/><circle cx="7" cy="4.500" r="3.150" fill="#e9a265"/><circle cx="7" cy="4.500" r="2.250" fill="#1f1f1f"/><circle cx="6.200" cy="3.700" r=".8" fill="#e9a265"/></svg><svg width="10" height="6" style="left:34.5px;top:10.0px"><path d="M.700 .700 L5 4.800 L9.300 .700" fill="none" stroke="#2a2a2a" stroke-width="1.100"/></svg><svg width="16" height="13" style="left:44.5px;top:6.2px"><path d="M1.500 11.400 V1.500 H6 L7.500 3 H14.500 V11.400Z" fill="#b4b4b4" stroke="#262626" stroke-width="1.300" stroke-linejoin="round"/><path d="M1.500 5.500 H14.500" stroke="#262626" stroke-width="1.200"/></svg><div class="nm" style="left:72px;top:7.0px">Schiff</div></div><div class="row abs" style="top:274px;height:39px"><div class="sw" style="background:#e9a265"></div><svg width="14" height="9" viewBox="0 0 14 9" style="left:8.500px;top:16.6px"><path d="M0 4.500 Q7 -3.700 14 4.500 Q7 12.700 0 4.500Z" fill="#1f1f1f"/><circle cx="7" cy="4.500" r="3.150" fill="#e9a265"/><circle cx="7" cy="4.500" r="2.250" fill="#1f1f1f"/><circle cx="6.200" cy="3.700" r=".8" fill="#e9a265"/></svg><svg width="8" height="8" style="left:56.5px;top:16.7px"><path d="M7 1 H3.800 V5" fill="none" stroke="#222" stroke-width="1.200"/><path d="M.500 4 H7.100 L3.800 7.600Z" fill="#222"/></svg><svg width="17" height="14" style="left:73.7px;top:13.5px"><defs><linearGradient id="gh" x1="0" y1="0" x2="1" y2="0"><stop offset="0" stop-color="#3a3a3a"/><stop offset="1" stop-color="#f4f4f4"/></linearGradient><linearGradient id="gh2" x1="0" y1="0" x2="0" y2="1"><stop offset="0" stop-color="#333"/><stop offset="1" stop-color="#8a8a8a"/></linearGradient></defs><rect x=".500" y=".500" width="15.500" height="12.500" fill="url(#gh)" stroke="#2a2a2a"/><rect x=".500" y=".500" width="15.500" height="5.500" fill="url(#gh2)" stroke="#2a2a2a"/><path d="M4.500 1 V5.500 M8.300 1 V5.500 M12 1 V5.500" stroke="#c4c4c4" stroke-width="1.800" opacity=".85"/></svg><svg width="8" height="15" style="left:101px;top:13.2px"><rect x="1" y=".800" width="6" height="7" rx="3" fill="none" stroke="#3a3a3a" stroke-width="1.200"/><rect x="1" y="6.700" width="6" height="7" rx="3" fill="none" stroke="#3a3a3a" stroke-width="1.200"/><rect x="3.100" y="3.500" width="1.800" height="7.500" fill="#222"/></svg><div class="th" style="left:113px;top:3.7px;width:24px;height:32.500px;border-bottom:0"></div><div class="nm" style="left:146px;top:15.0px">Farbton/Sättigung 1</div></div><div class="row abs" style="top:315px;height:39px"><div class="sw" style="background:#e9a265"></div><svg width="14" height="9" viewBox="0 0 14 9" style="left:8.500px;top:16.6px"><path d="M0 4.500 Q7 -3.700 14 4.500 Q7 12.700 0 4.500Z" fill="#1f1f1f"/><circle cx="7" cy="4.500" r="3.150" fill="#e9a265"/><circle cx="7" cy="4.500" r="2.250" fill="#1f1f1f"/><circle cx="6.200" cy="3.700" r=".8" fill="#e9a265"/></svg><svg width="8" height="8" style="left:56.5px;top:16.7px"><path d="M7 1 H3.800 V5" fill="none" stroke="#222" stroke-width="1.200"/><path d="M.500 4 H7.100 L3.800 7.600Z" fill="#222"/></svg><svg width="17" height="14" style="left:73.7px;top:13.5px"><rect x=".500" y=".500" width="15.500" height="12.500" fill="#bdbdbd" stroke="#7a7a7a"/><path d="M4.300 .500 V13 M8.300 .500 V13 M12.300 .500 V13 M.500 4.700 H16 M.500 8.900 H16" stroke="#7c7c7c" stroke-width=".9"/><path d="M.500 0 V13 H16" fill="none" stroke="#333" stroke-width="1"/><path d="M1 12.800 Q7 12.500 8.500 7 Q10 1.200 15.500 .800" fill="none" stroke="#2a2a2a" stroke-width="1.100"/></svg><svg width="8" height="15" style="left:101px;top:13.2px"><rect x="1" y=".800" width="6" height="7" rx="3" fill="none" stroke="#3a3a3a" stroke-width="1.200"/><rect x="1" y="6.700" width="6" height="7" rx="3" fill="none" stroke="#3a3a3a" stroke-width="1.200"/><rect x="3.100" y="3.500" width="1.800" height="7.500" fill="#222"/></svg><div class="th" style="left:113px;top:3.7px;width:24px;height:32.500px;border-bottom:0"></div><div class="nm" style="left:146px;top:15.0px">Kurven 1</div></div><div class="row abs" style="top:356px;height:39px"><div class="sw" style="background:#e9a265"></div><svg width="14" height="9" viewBox="0 0 14 9" style="left:8.500px;top:16.6px"><path d="M0 4.500 Q7 -3.700 14 4.500 Q7 12.700 0 4.500Z" fill="#1f1f1f"/><circle cx="7" cy="4.500" r="3.150" fill="#e9a265"/><circle cx="7" cy="4.500" r="2.250" fill="#1f1f1f"/><circle cx="6.200" cy="3.700" r=".8" fill="#e9a265"/></svg><svg width="8" height="8" style="left:56.5px;top:16.7px"><path d="M7 1 H3.800 V5" fill="none" stroke="#222" stroke-width="1.200"/><path d="M.500 4 H7.100 L3.800 7.600Z" fill="#222"/></svg><div class="th" style="left:66px;top:3.7px;width:24px;height:32.5px;background:#fff;overflow:hidden;border-bottom:0"><svg width="24" height="32.5" style="left:0;top:0"><defs><pattern id="ck1" width="8" height="8" x="-1" y="-1" patternUnits="userSpaceOnUse"><rect width="4" height="4" fill="#cfcfcf"/><rect x="4" y="4" width="4" height="4" fill="#cfcfcf"/></pattern></defs><rect width="100%" height="100%" fill="url(#ck1)"/><defs><linearGradient id="gt" x1="0" y1="0" x2="0" y2="1"><stop offset="0" stop-color="#f8e3c4"/><stop offset=".4" stop-color="#f4b44a"/><stop offset="1" stop-color="#ea6f1c"/></linearGradient></defs><rect x="0" y="7.500" width="23" height="16.500" fill="url(#gt)"/></svg></div><svg width="17" height="16" style="left:74.3px;top:21.2px"><rect x=".750" y=".750" width="15" height="14.500" fill="#bcbcbc" stroke="#5a5a5a" stroke-width="1.500"/><path d="M6.500 3.500 H10 L12.500 6 V12 H6.500Z" fill="#d8d8d8" stroke="#222" stroke-width="1"/><path d="M10 3.500 V6 H12.500" fill="none" stroke="#222" stroke-width=".8"/><rect x="8" y="8" width="3.500" height="4" fill="#222"/><rect x="4" y="8" width="5" height="5" fill="#d8d8d8" stroke="#222" stroke-width="1"/></svg><div class="nm" style="left:99px;top:15.0px">Textur</div></div><div class="row abs" style="top:397px;height:39px"><div class="sw" style="background:#e9a265"></div><svg width="14" height="9" viewBox="0 0 14 9" style="left:8.500px;top:16.6px"><path d="M0 4.500 Q7 -3.700 14 4.500 Q7 12.700 0 4.500Z" fill="#1f1f1f"/><circle cx="7" cy="4.500" r="3.150" fill="#e9a265"/><circle cx="7" cy="4.500" r="2.250" fill="#1f1f1f"/><circle cx="6.200" cy="3.700" r=".8" fill="#e9a265"/></svg><div class="th" style="left:50px;top:3.7px;width:24px;height:32.5px;background:#fff;overflow:hidden;border-bottom:0"><svg width="24" height="32.5" style="left:0;top:0"><defs><pattern id="ck2" width="8" height="8" x="-1" y="-1" patternUnits="userSpaceOnUse"><rect width="4" height="4" fill="#cfcfcf"/><rect x="4" y="4" width="4" height="4" fill="#cfcfcf"/></pattern></defs><rect width="100%" height="100%" fill="url(#ck2)"/><path d="M6.500 17.500 L7.500 14.500 L10.500 15.500 L12.500 13 L14.500 15.300 L18 12.800 L19.500 15 L21.500 14 L21 19 L8 19Z" fill="#f4601a"/></svg></div><svg width="17" height="16" style="left:58.3px;top:21.2px"><rect x=".750" y=".750" width="15" height="14.500" fill="#bcbcbc" stroke="#5a5a5a" stroke-width="1.500"/><path d="M6.500 3.500 H10 L12.500 6 V12 H6.500Z" fill="#d8d8d8" stroke="#222" stroke-width="1"/><path d="M10 3.500 V6 H12.500" fill="none" stroke="#222" stroke-width=".8"/><rect x="8" y="8" width="3.500" height="4" fill="#222"/><rect x="4" y="8" width="5" height="5" fill="#d8d8d8" stroke="#222" stroke-width="1"/></svg><div class="nm" style="left:82.5px;top:15.0px;text-decoration:underline;text-underline-offset:.5px;text-decoration-skip-ink:none;text-decoration-thickness:1px">Papierschiff&nbsp;</div></div><div class="row abs" style="top:438px;height:39px"><div class="sw" style="background:#e9a265"></div><svg width="14" height="9" viewBox="0 0 14 9" style="left:8.500px;top:16.6px"><path d="M0 4.500 Q7 -3.700 14 4.500 Q7 12.700 0 4.500Z" fill="#1f1f1f"/><circle cx="7" cy="4.500" r="3.150" fill="#e9a265"/><circle cx="7" cy="4.500" r="2.250" fill="#1f1f1f"/><circle cx="6.200" cy="3.700" r=".8" fill="#e9a265"/></svg><svg width="8" height="8" style="left:56.5px;top:16.7px"><path d="M7 1 H3.800 V5" fill="none" stroke="#222" stroke-width="1.200"/><path d="M.500 4 H7.100 L3.800 7.600Z" fill="#222"/></svg><div class="th" style="left:66px;top:3.7px;width:33px;height:32.500px"><div style="position:absolute;left:0;top:22.500px;width:31px;height:1px;background:#222"></div><div style="position:absolute;left:0;top:23.500px;width:31px;height:7.500px;background:#d4d4d4"></div><div style="position:absolute;left:0;top:28px;width:31px;height:1px;background:#555"></div><svg width="7" height="4" style="position:absolute;left:12px;top:24.500px"><path d="M0 4 L3.500 0 L7 4Z" fill="#222"/></svg></div><svg width="8" height="15" style="left:101px;top:13.2px"><rect x="1" y=".800" width="6" height="7" rx="3" fill="none" stroke="#3a3a3a" stroke-width="1.200"/><rect x="1" y="6.700" width="6" height="7" rx="3" fill="none" stroke="#3a3a3a" stroke-width="1.200"/><rect x="3.100" y="3.500" width="1.800" height="7.500" fill="#222"/></svg><div class="th" style="left:113px;top:3.7px;width:24px;height:32.500px;border-bottom:0"></div><div class="nm" style="left:146px;top:15.0px">Farbfüllung 8</div></div><div class="row abs" style="top:479px;height:39px"><div class="sw" style="background:#e9a265"></div><svg width="14" height="9" viewBox="0 0 14 9" style="left:8.500px;top:16.6px"><path d="M0 4.500 Q7 -3.700 14 4.500 Q7 12.700 0 4.500Z" fill="#1f1f1f"/><circle cx="7" cy="4.500" r="3.150" fill="#e9a265"/><circle cx="7" cy="4.500" r="2.250" fill="#1f1f1f"/><circle cx="6.200" cy="3.700" r=".8" fill="#e9a265"/></svg><div class="th" style="left:50px;top:3.7px;width:24px;height:32.5px;background:#fff;overflow:hidden;border-bottom:0"><svg width="24" height="32.5" style="left:0;top:0"><defs><pattern id="ck3" width="8" height="8" x="-1" y="-1" patternUnits="userSpaceOnUse"><rect width="4" height="4" fill="#cfcfcf"/><rect x="4" y="4" width="4" height="4" fill="#cfcfcf"/></pattern></defs><rect width="100%" height="100%" fill="url(#ck3)"/><path d="M8 17.500 L10 15.500 M12 17.500 L13 15 M15 17.500 L17 15 M19 17.500 L20.500 15.500" stroke="#8a8a8a" stroke-width=".8"/></svg></div><svg width="17" height="16" style="left:58.3px;top:21.2px"><rect x=".750" y=".750" width="15" height="14.500" fill="#bcbcbc" stroke="#5a5a5a" stroke-width="1.500"/><path d="M6.500 3.500 H10 L12.500 6 V12 H6.500Z" fill="#d8d8d8" stroke="#222" stroke-width="1"/><path d="M10 3.500 V6 H12.500" fill="none" stroke="#222" stroke-width=".8"/><rect x="8" y="8" width="3.500" height="4" fill="#222"/><rect x="4" y="8" width="5" height="5" fill="#d8d8d8" stroke="#222" stroke-width="1"/></svg><div class="nm" style="left:82.5px;top:15.0px;text-decoration:underline;text-underline-offset:.5px;text-decoration-skip-ink:none;text-decoration-thickness:1px">Papierschiff_raster&nbsp;</div></div><div class="row abs" style="top:520px;height:39px"><div style="left:29.500px;top:0;width:1px;bottom:0;background:#a6a6a6"></div><svg width="14" height="9" viewBox="0 0 14 9" style="left:8.500px;top:16.6px"><path d="M0 4.500 Q7 -3.700 14 4.500 Q7 12.700 0 4.500Z" fill="#1f1f1f"/><circle cx="7" cy="4.500" r="3.150" fill="#b8b8b8"/><circle cx="7" cy="4.500" r="2.250" fill="#1f1f1f"/><circle cx="6.200" cy="3.700" r=".8" fill="#b8b8b8"/></svg><svg width="8" height="8" style="left:40.5px;top:16.7px"><path d="M7 1 H3.800 V5" fill="none" stroke="#222" stroke-width="1.200"/><path d="M.500 4 H7.100 L3.800 7.600Z" fill="#222"/></svg><div class="th" style="left:50px;top:3.7px;width:24px;height:32.5px;background:#fff;overflow:hidden;border-bottom:0"><svg width="24" height="32.5" style="left:0;top:0"><defs><pattern id="ck4" width="8" height="8" x="-1" y="-1" patternUnits="userSpaceOnUse"><rect width="4" height="4" fill="#cfcfcf"/><rect x="4" y="4" width="4" height="4" fill="#cfcfcf"/></pattern></defs><rect width="100%" height="100%" fill="url(#ck4)"/><path d="M7 21 Q14 16 22 18.500" stroke="#4f7f8a" stroke-width="1.200" fill="none"/><path d="M9 19 L14 14.500 L19 18" stroke="#555" stroke-width=".8" fill="none"/></svg></div><svg width="17" height="16" style="left:58.3px;top:21.2px"><rect x=".750" y=".750" width="15" height="14.500" fill="#bcbcbc" stroke="#5a5a5a" stroke-width="1.500"/><path d="M6.500 3.500 H10 L12.500 6 V12 H6.500Z" fill="#d8d8d8" stroke="#222" stroke-width="1"/><path d="M10 3.500 V6 H12.500" fill="none" stroke="#222" stroke-width=".8"/><rect x="8" y="8" width="3.500" height="4" fill="#222"/><rect x="4" y="8" width="5" height="5" fill="#d8d8d8" stroke="#222" stroke-width="1"/></svg><div class="nm" style="left:82.5px;top:15.0px">Welle</div></div><div class="row abs" style="top:561px;height:23px"><div class="sw" style="background:#00a59d"></div><svg width="14" height="9" viewBox="0 0 14 9" style="left:8.500px;top:8.6px"><path d="M0 4.500 Q7 -3.700 14 4.500 Q7 12.700 0 4.500Z" fill="#1f1f1f"/><circle cx="7" cy="4.500" r="3.150" fill="#00a59d"/><circle cx="7" cy="4.500" r="2.250" fill="#1f1f1f"/><circle cx="6.200" cy="3.700" r=".8" fill="#00a59d"/></svg><svg width="6" height="11" style="left:36px;top:7.3px"><path d="M.800 .700 L4.600 5.500 L.800 10.300" fill="none" stroke="#2a2a2a" stroke-width="1.100"/></svg><svg width="16" height="13" style="left:44.5px;top:6.2px"><path d="M1.500 11.400 V1.500 H6 L7.500 3 H14.500 V11.400Z" fill="#9c9c9c" stroke="#262626" stroke-width="1.300" stroke-linejoin="round"/></svg><div class="nm" style="left:72px;top:7.0px;text-decoration:underline;text-underline-offset:.5px;text-decoration-skip-ink:none;text-decoration-thickness:1px">Wellen&nbsp;</div></div><div class="row abs" style="top:586px;height:23px"><div class="sw" style="background:#9f9f9f"></div><svg width="14" height="9" viewBox="0 0 14 9" style="left:8.500px;top:8.6px"><path d="M0 4.500 Q7 -3.700 14 4.500 Q7 12.700 0 4.500Z" fill="#1f1f1f"/><circle cx="7" cy="4.500" r="3.150" fill="#9f9f9f"/><circle cx="7" cy="4.500" r="2.250" fill="#1f1f1f"/><circle cx="6.200" cy="3.700" r=".8" fill="#9f9f9f"/></svg><svg width="6" height="11" style="left:36px;top:7.3px"><path d="M.800 .700 L4.600 5.500 L.800 10.300" fill="none" stroke="#2a2a2a" stroke-width="1.100"/></svg><svg width="16" height="13" style="left:44.5px;top:6.2px"><path d="M1.500 11.400 V1.500 H6 L7.500 3 H14.500 V11.400Z" fill="#9c9c9c" stroke="#262626" stroke-width="1.300" stroke-linejoin="round"/></svg><div class="nm" style="left:72px;top:7.0px">Linien</div></div><div class="row abs" style="top:611px;height:23px"><div class="sw" style="background:#dd6da1"></div><svg width="14" height="9" viewBox="0 0 14 9" style="left:8.500px;top:8.6px"><path d="M0 4.500 Q7 -3.700 14 4.500 Q7 12.700 0 4.500Z" fill="#1f1f1f"/><circle cx="7" cy="4.500" r="3.150" fill="#dd6da1"/><circle cx="7" cy="4.500" r="2.250" fill="#1f1f1f"/><circle cx="6.200" cy="3.700" r=".8" fill="#dd6da1"/></svg><svg width="6" height="11" style="left:36px;top:7.3px"><path d="M.800 .700 L4.600 5.500 L.800 10.300" fill="none" stroke="#2a2a2a" stroke-width="1.100"/></svg><svg width="16" height="13" style="left:44.5px;top:6.2px"><path d="M1.500 11.400 V1.500 H6 L7.500 3 H14.500 V11.400Z" fill="#9c9c9c" stroke="#262626" stroke-width="1.300" stroke-linejoin="round"/></svg><div class="nm" style="left:72px;top:7.0px">Kreis</div></div><div class="row abs" style="top:636px;height:40px"><div style="left:29.500px;top:0;width:1px;bottom:0;background:#a6a6a6"></div><svg width="14" height="9" viewBox="0 0 14 9" style="left:8.500px;top:16.6px"><path d="M0 4.500 Q7 -3.700 14 4.500 Q7 12.700 0 4.500Z" fill="#1f1f1f"/><circle cx="7" cy="4.500" r="3.150" fill="#b8b8b8"/><circle cx="7" cy="4.500" r="2.250" fill="#1f1f1f"/><circle cx="6.200" cy="3.700" r=".8" fill="#b8b8b8"/></svg><div class="th" style="left:34px;top:3.7px;width:24px;height:32.500px;border-bottom:0"></div><div class="nm" style="left:66.7px;top:15.0px;font-style:italic;letter-spacing:.15px">Hintergrund</div><svg width="12" height="13" style="left:224px;top:14.3px"><rect x="1.600" y="5.300" width="8.800" height="6.600" rx=".6" fill="#a9a9a9" stroke="#2c2c2c" stroke-width="1.200"/><path d="M3.600 5.300 V3.600 Q3.600 1.200 6 1.200 Q8.400 1.200 8.400 3.600 V5.300" fill="none" stroke="#2c2c2c" stroke-width="1.200"/><circle cx="6" cy="8.700" r="1.100" fill="#222"/></svg></div><div style="left:0;top:933px;width:268px;height:25px;background:#b8b8b8;border-top:1px solid #a0a0a0"></div><svg width="268" height="24" viewBox="696 934 268 24" style="left:0;top:934px">
<g fill="none" stroke="#8a8a8a" stroke-width="1.300"><rect x="761.500" y="942" width="7.500" height="5.600" rx="2.800"/><rect x="766.500" y="942" width="7.500" height="5.600" rx="2.800"/><path d="M764.500 944.800 H771"/></g>
<text x="788.500" y="950" font-family="Liberation Sans, sans-serif" font-style="italic" font-size="14" fill="#888" letter-spacing="-.5">fx</text>
<path d="M800 952 H803.500 L801.750 954Z" fill="#999"/>
<rect x="815" y="939.500" width="13" height="9.500" fill="#7c7c7c"/><ellipse cx="821.500" cy="944.200" rx="3.500" ry="3" fill="#c0c0c0"/>
<circle cx="848.500" cy="945" r="5" fill="none" stroke="#1c1c1c" stroke-width="1.100"/><path d="M852.040 941.460 A5 5 0 0 1 844.960 948.540Z" fill="#1c1c1c"/>
<path d="M853.500 951.500 H857 L855.250 953.500Z" fill="#111"/>
<path d="M870.500 949.500 V940.500 H874.500 L875.800 942 H881.500 V949.500Z" fill="#8c8c8c" stroke="#2a2a2a" stroke-width="1"/>
<rect x="898.500" y="940" width="10" height="10" fill="none" stroke="#1c1c1c" stroke-width="1.100"/><path d="M903.500 942.500 V947.500 M901 945 H906" stroke="#1c1c1c" stroke-width="1.100"/>
<g stroke="#8a8a8a" fill="none" stroke-width="1.100"><path d="M925.500 942 H934.500 M928 942 V940.500 H932 V942"/><path d="M926.500 942.500 L927 950.500 H933 L933.500 942.500"/><path d="M928.600 944 V949 M930 944 V949 M931.400 944 V949" stroke-width=".9"/></g>
</svg><div style="left:266.500px;top:0;width:1px;height:958px;background:#9c9c9c"></div></div>
</body>
</html>
